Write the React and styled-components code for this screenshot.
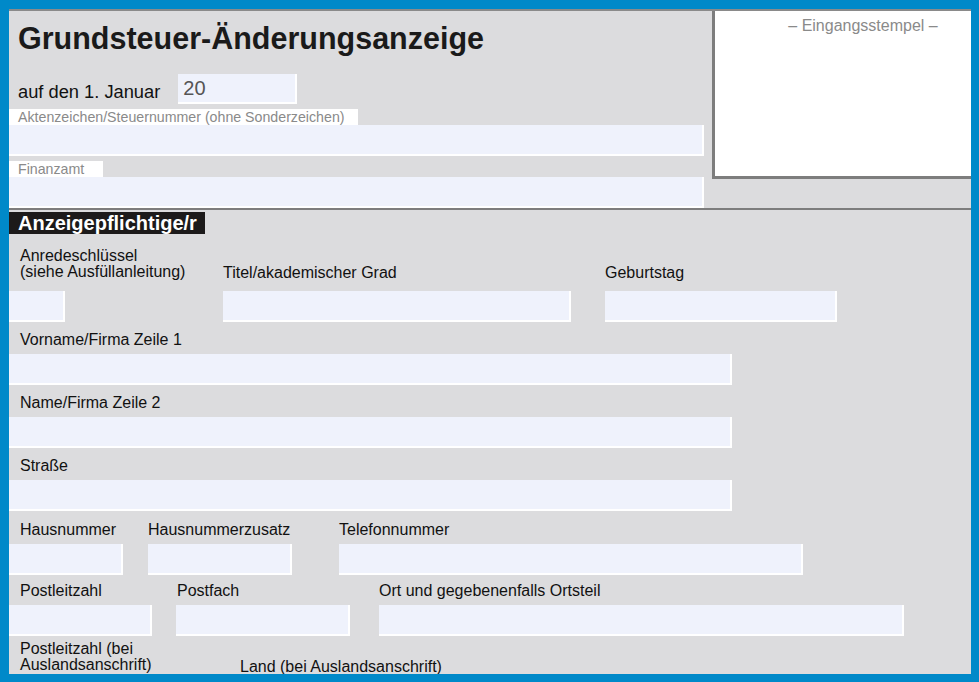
import styled, { createGlobalStyle } from 'styled-components';

const Global = createGlobalStyle`
  html, body { margin: 0; padding: 0; }
  body { font-family: "Liberation Sans", Arial, sans-serif; background: #0089c9; }
`;

const Frame = styled.div`
  width: 979px;
  height: 682px;
  box-sizing: border-box;
  padding: 9px 8px 8px 9px;
  background: #0089c9;
  overflow: hidden;
`;

const Sheet = styled.div`
  height: 100%;
  background: #dcdcde;
  overflow: hidden;
  color: #111;
`;

const Header = styled.div`
  display: flex;
  height: 201px;
  border-top: 2px solid #8a8a8a;
  border-bottom: 2px solid #7d7d7d;
  box-sizing: border-box;
`;

const HeaderLeft = styled.div`
  width: 695px;
  display: flex;
  flex-direction: column;
`;

const Title = styled.h1`
  margin: 8px 0 0 9px;
  font-size: 30.5px;
  font-weight: bold;
  color: #1a1a1a;
  height: 38px;
  line-height: 38px;
`;

const DateRow = styled.div`
  display: flex;
  align-items: flex-end;
  margin-top: 17px;
  gap: 18px;
  padding-left: 9px;
`;

const DateText = styled.span`
  font-size: 18.3px;
  padding-bottom: 1px;
`;

const Input = styled.div`
  box-sizing: border-box;
  width: ${(p) => p.w}px;
  height: ${(p) => p.h || 31}px;
  margin-left: ${(p) => p.ml || 0}px;
  background: #eff2fc;
  border-right: 2px solid #fff;
  border-bottom: 2px solid #fff;
  font-size: 20px;
  color: #555;
  padding: 3px 5px;
  flex-shrink: 0;
`;

const SmallLabel = styled.div`
  align-self: flex-start;
  background: #fff;
  color: #8a8a8a;
  font-size: 14.2px;
  height: 16px;
  line-height: 16px;
  width: ${(p) => p.w}px;
  box-sizing: border-box;
  padding-left: 9px;
  margin-top: ${(p) => p.mt}px;
`;

const Stamp = styled.div`
  margin-left: 8px;
  width: 262px;
  height: 168px;
  box-sizing: border-box;
  background: #fff;
  border-left: 3px solid #7d7d7d;
  border-bottom: 3px solid #7d7d7d;
  text-align: center;
  color: #8a8a8a;
  font-size: 16px;
  padding: 6px 0 0 40px;
`;

const Section = styled.div`
  display: inline-block;
  margin-top: 2px;
  background: #1c1a1a;
  color: #fff;
  font-weight: bold;
  font-size: 20px;
  padding: 0 8px 0 9px;
  height: 22px;
  box-sizing: border-box;
  line-height: 22px;
`;

const Labels = styled.div`
  display: flex;
  align-items: flex-end;
  height: ${(p) => p.h}px;
  font-size: 16px;
  line-height: 16px;
  padding-bottom: ${(p) => p.pb ?? 6}px;
  box-sizing: border-box;
`;

const Label = styled.div`
  width: ${(p) => p.w}px;
  padding-left: ${(p) => p.pl ?? 11}px;
  box-sizing: border-box;
  flex-shrink: 0;
`;

const Inputs = styled.div`
  display: flex;
`;

export default function App() {
  return (
    <>
      <Global />
      <Frame>
        <Sheet>
          <Header>
            <HeaderLeft>
              <Title>Grundsteuer-Änderungsanzeige</Title>
              <DateRow>
                <DateText>auf den 1. Januar</DateText>
                <Input w={119} h={30}>20</Input>
              </DateRow>
              <SmallLabel w={349} mt={5}>Aktenzeichen/Steuernummer (ohne Sonderzeichen)</SmallLabel>
              <Input w={695} h={31} />
              <SmallLabel w={94} mt={5}>Finanzamt</SmallLabel>
              <Input w={695} h={31} />
            </HeaderLeft>
            <Stamp>– Eingangsstempel –</Stamp>
          </Header>
          <Section>Anzeigepflichtige/r</Section>
          <Labels h={57} pb={0}>
            <Label w={214} style={{ alignSelf: 'flex-start', paddingTop: 14 }}>
              Anredeschlüssel<br />(siehe Ausfüllanleitung)
            </Label>
            <Label w={382} pl={0} style={{ paddingBottom: 10 }}>Titel/akademischer Grad</Label>
            <Label w={200} pl={0} style={{ paddingBottom: 10 }}>Geburtstag</Label>
          </Labels>
          <Inputs>
            <Input w={56} />
            <Input w={348} ml={158} />
            <Input w={232} ml={34} />
          </Inputs>
          <Labels h={32}><Label w={400}>Vorname/Firma Zeile 1</Label></Labels>
          <Input w={723} />
          <Labels h={32}><Label w={400}>Name/Firma Zeile 2</Label></Labels>
          <Input w={723} />
          <Labels h={32}><Label w={400}>Straße</Label></Labels>
          <Input w={723} />
          <Labels h={33}>
            <Label w={139}>Hausnummer</Label>
            <Label w={191} pl={0}>Hausnummerzusatz</Label>
            <Label w={300} pl={0}>Telefonnummer</Label>
          </Labels>
          <Inputs>
            <Input w={114} />
            <Input w={144} ml={25} />
            <Input w={464} ml={47} />
          </Inputs>
          <Labels h={30}>
            <Label w={168}>Postleitzahl</Label>
            <Label w={202} pl={0}>Postfach</Label>
            <Label w={400} pl={0}>Ort und gegebenenfalls Ortsteil</Label>
          </Labels>
          <Inputs>
            <Input w={143} />
            <Input w={174} ml={24} />
            <Input w={525} ml={29} />
          </Inputs>
          <Labels h={40} pb={0} style={{ alignItems: 'flex-start', paddingTop: 5 }}>
            <Label w={231}>Postleitzahl (bei<br />Auslandsanschrift)</Label>
            <Label w={300} pl={0} style={{ paddingTop: 18 }}>Land (bei Auslandsanschrift)</Label>
          </Labels>
        </Sheet>
      </Frame>
    </>
  );
}
